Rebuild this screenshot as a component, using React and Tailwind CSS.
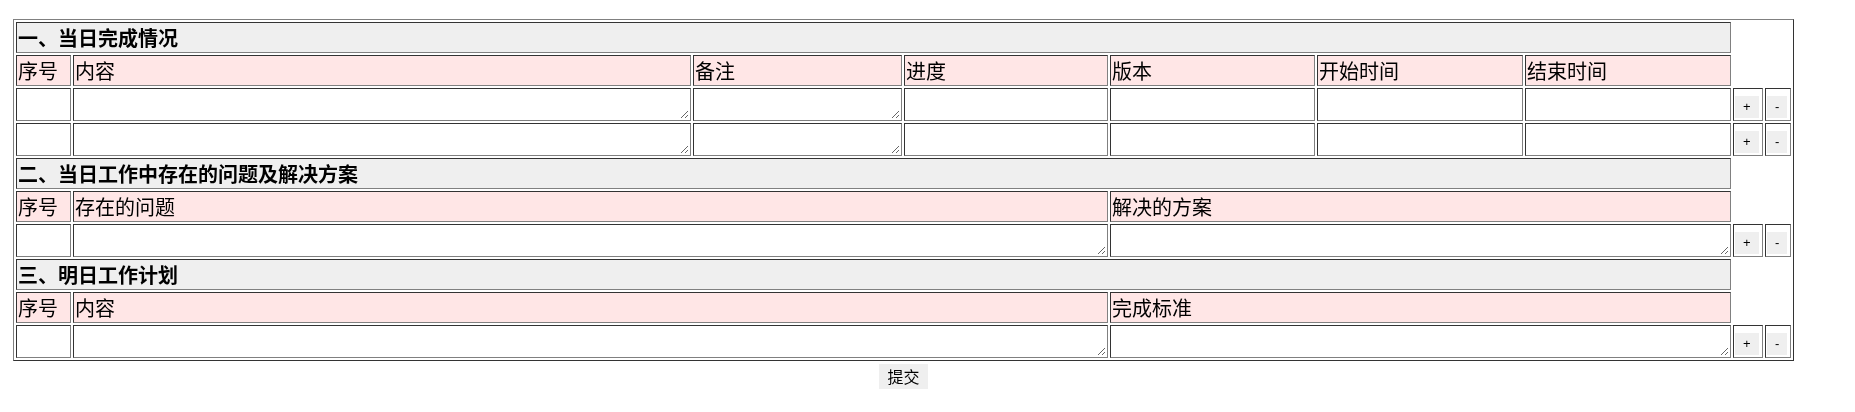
import React, { useState } from 'react';

// one border per cell: dark top/left, grey bottom/right (legacy "inset" look)
const cell = 'border border-t-[#333] border-l-[#333] border-b-[#808080] border-r-[#808080] p-[1px]';
const titleCell = `${cell} bg-[#efefef] font-bold text-left align-middle h-[31px] leading-[27px]`;
const headCell = `${cell} bg-[#ffe6e6] font-normal text-left align-middle h-[31px] leading-[27px]`;
const dataCell = `${cell} h-[33px] align-middle leading-[0]`;

const Area = () => (
  <textarea className="block w-full h-[29px] bg-white outline-none resize-y leading-normal" />
);

const Field = () => <input className="block w-full h-[29px] bg-white outline-none leading-normal" />;

const btn = "block mt-[4px] h-[22px] px-[8px] bg-[#efefef] text-[13px] font-['Liberation_Sans',sans-serif] leading-[22px]";

const RowButtons = ({ onAdd, onRemove }) => (
  <>
    <td className={dataCell}>
      <button onClick={onAdd} className={btn}>+</button>
    </td>
    <td className={dataCell}>
      <button onClick={onRemove} className={btn}>-</button>
    </td>
  </>
);

const useRows = (n) => {
  const [rows, setRows] = useState(Array.from({ length: n }, (_, i) => i));
  const add = () => setRows((r) => [...r, Date.now()]);
  const remove = () => setRows((r) => (r.length > 1 ? r.slice(0, -1) : r));
  return [rows, add, remove];
};

export default function App() {
  const [done, addDone, removeDone] = useRows(2);
  const [issues, addIssue, removeIssue] = useRows(1);
  const [plans, addPlan, removePlan] = useRows(1);

  return (
    <div className="pt-[19px] pl-[13px] font-['Noto_Sans_CJK_SC',sans-serif] text-black">
      <div className="w-[1781px]">
        <table className="table-fixed border-separate border-spacing-[2px] w-[1781px] border border-t-[#808080] border-l-[#808080] border-b-[#333] border-r-[#333] text-[20px]">
          <colgroup>
            <col className="w-[55px]" />
            <col className="w-[618px]" />
            <col className="w-[209px]" />
            <col className="w-[204px]" />
            <col className="w-[205px]" />
            <col className="w-[206px]" />
            <col className="w-[206px]" />
            <col className="w-[30px]" />
            <col className="w-[26px]" />
          </colgroup>
          <tbody>
            <tr>
              <th colSpan={7} className={titleCell}>一、当日完成情况</th>
            </tr>
            <tr>
              <th className={headCell}>序号</th>
              <th className={headCell}>内容</th>
              <th className={headCell}>备注</th>
              <th className={headCell}>进度</th>
              <th className={headCell}>版本</th>
              <th className={headCell}>开始时间</th>
              <th className={headCell}>结束时间</th>
            </tr>
            {done.map((id) => (
              <tr key={id}>
                <td className={dataCell}></td>
                <td className={dataCell}><Area /></td>
                <td className={dataCell}><Area /></td>
                <td className={dataCell}><Field /></td>
                <td className={dataCell}><Field /></td>
                <td className={dataCell}><Field /></td>
                <td className={dataCell}><Field /></td>
                <RowButtons onAdd={addDone} onRemove={removeDone} />
              </tr>
            ))}

            <tr>
              <th colSpan={7} className={titleCell}>二、当日工作中存在的问题及解决方案</th>
            </tr>
            <tr>
              <th className={headCell}>序号</th>
              <th colSpan={3} className={headCell}>存在的问题</th>
              <th colSpan={3} className={headCell}>解决的方案</th>
            </tr>
            {issues.map((id) => (
              <tr key={id}>
                <td className={dataCell}></td>
                <td colSpan={3} className={dataCell}><Area /></td>
                <td colSpan={3} className={dataCell}><Area /></td>
                <RowButtons onAdd={addIssue} onRemove={removeIssue} />
              </tr>
            ))}

            <tr>
              <th colSpan={7} className={titleCell}>三、明日工作计划</th>
            </tr>
            <tr>
              <th className={headCell}>序号</th>
              <th colSpan={3} className={headCell}>内容</th>
              <th colSpan={3} className={headCell}>完成标准</th>
            </tr>
            {plans.map((id) => (
              <tr key={id}>
                <td className={dataCell}></td>
                <td colSpan={3} className={dataCell}><Area /></td>
                <td colSpan={3} className={dataCell}><Area /></td>
                <RowButtons onAdd={addPlan} onRemove={removePlan} />
              </tr>
            ))}
          </tbody>
        </table>
        <div className="text-center pt-[3px]">
          <button className="h-[25px] px-[8px] bg-[#efefef] text-[16px] leading-[25px]">提交</button>
        </div>
      </div>
    </div>
  );
}
